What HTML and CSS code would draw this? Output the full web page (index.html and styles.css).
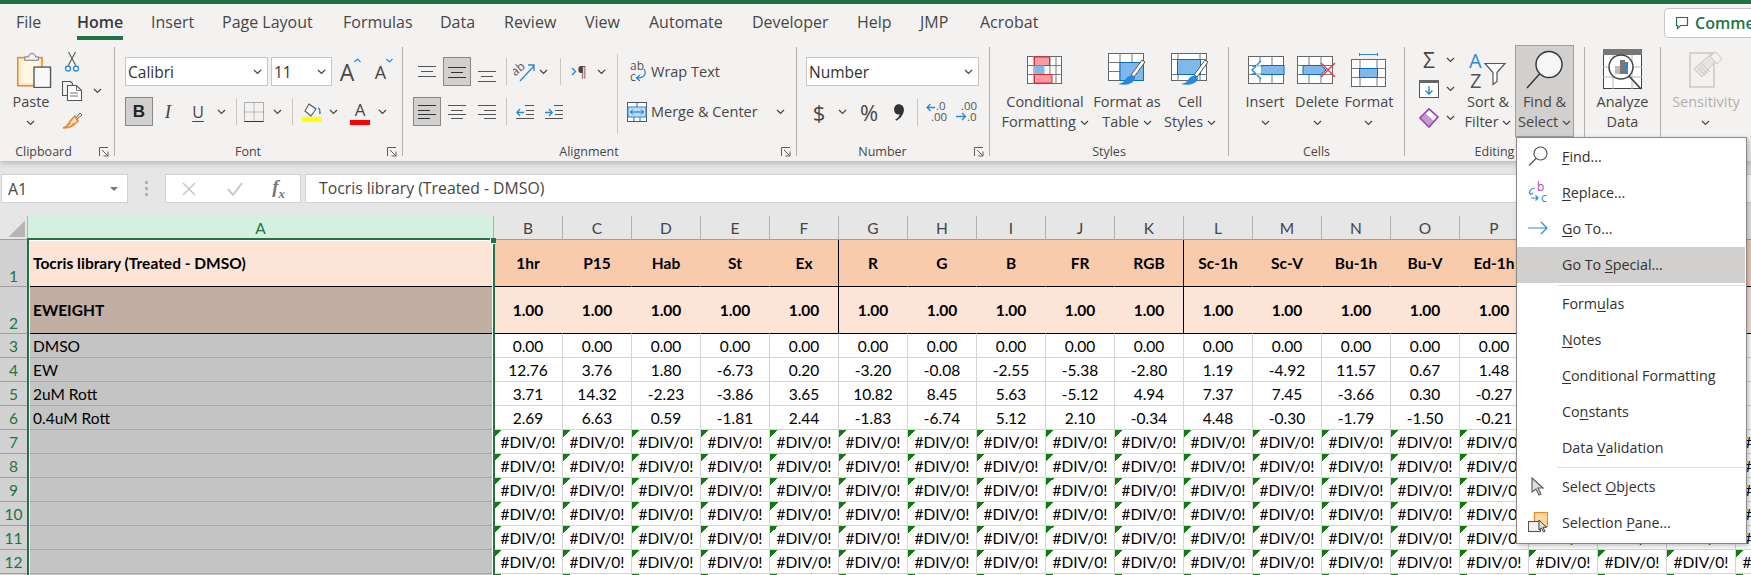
FILE: index.html
```html
<!DOCTYPE html>
<html lang="en">
  <head>
    <meta charset="UTF-8" />
    <title>Tocris library - Excel</title>
    <link rel="stylesheet" href="styles.css">
  </head>
  <body>
    <!-- shared icon bits -->
    <svg class="sprite" width="0" height="0">
      <symbol id="chev" viewBox="0 0 9 6"><path d="M1 1l3.5 3.5L8 1" fill="none" stroke="#444" stroke-width="1.2"/></symbol>
      <symbol id="launch" viewBox="0 0 10 10"><path d="M.5 9V.5H9M3 3l5.5 5.5M9 4.5V9H4.5" fill="none" stroke="#605e5c"/></symbol>
    </svg>

    <div class="topbar"></div>

    <div class="ribbon">
      <div class="tabs">
        <span>File</span>
        <span class="tab-on">Home</span>
        <span>Insert</span>
        <span>Page Layout</span>
        <span>Formulas</span>
        <span>Data</span>
        <span>Review</span>
        <span>View</span>
        <span>Automate</span>
        <span>Developer</span>
        <span>Help</span>
        <span>JMP</span>
        <span>Acrobat</span>
        <div class="comments">
          <svg width="14" height="14" viewBox="0 0 14 14"><path d="M1.5 1.5h11v8h-7l-3 3v-3h-1z" fill="none" stroke="#217346" stroke-width="1.2"/></svg>
          <span>Comments</span>
        </div>
      </div>

      <div class="groups">
        <!-- Clipboard -->
        <section class="group g-clip">
          <div class="body row">
            <div class="big w-paste">
              <div class="big-ic paste-ic">
                <svg width="35" height="36" viewBox="0 0 36 37">
                  <rect x=".75" y="5.75" width="25" height="29" fill="#fde8bf" stroke="#e8862e" stroke-width="1.5"/>
                  <rect x="4" y="9" width="19" height="23" fill="#fff7e4"/>
                  <path d="M8 8.5V5h4c0-5 7-5 7 0h3v3.5z" fill="#f3f2f1" stroke="#777"/>
                  <rect x="17.5" y="15.5" width="17" height="21" fill="#f9f9f9" stroke="#555" stroke-width="1.4"/>
                </svg>
              </div>
              <div class="big-text">Paste<br><svg class="chev"><use href="#chev"/></svg></div>
            </div>
            <div class="clip-tools">
              <svg width="16" height="21" viewBox="0 0 16 21"><path d="M4.5 1l7 13M11.5 1l-7 13" fill="none" stroke="#555" stroke-width="1.1"/><circle cx="4" cy="17.5" r="2.5" fill="none" stroke="#2b88d8" stroke-width="1.3"/><circle cx="12" cy="17.5" r="2.5" fill="none" stroke="#2b88d8" stroke-width="1.3"/></svg>
              <span></span>
              <svg width="21" height="20" viewBox="0 0 21 20"><path d="M5.5 14.5H.5V.5h8l2 2v2" fill="none" stroke="#555" stroke-width="1.1"/><path d="M5.5 4.5h9l5 5v10h-14z" fill="#fff" stroke="#555" stroke-width="1.1"/><path d="M14.5 4.5v5h5M8 12h8M8 15h8" fill="none" stroke="#777"/></svg>
              <svg class="chev"><use href="#chev"/></svg>
              <svg width="21" height="20" viewBox="0 0 21 20"><path d="M14 7l4-5 2 2-5 4" fill="#eee" stroke="#666"/><path d="M13 5l3 5-2 2c-3 3-8 5-13 5 3-1 5-3 6-5 1-2 3-4 6-7z" fill="#f7dfc2" stroke="#e8862e" stroke-width="1.5"/><path d="M5 15l4-3M9 15l3-3" stroke="#e8862e"/></svg>
            </div>
          </div>
          <div class="label"><span class="label-text">Clipboard</span><svg class="launch"><use href="#launch"/></svg></div>
        </section>

        <!-- Font -->
        <section class="group g-font">
          <div class="body">
            <div class="font-row1">
              <div class="select w-font"><span>Calibri</span><svg class="chev"><use href="#chev"/></svg></div>
              <div class="select w-size"><span>11</span><svg class="chev"><use href="#chev"/></svg></div>
              <div class="grow-a"><span class="big-a">A</span><svg width="7" height="5" viewBox="0 0 7 5"><path d="M.5 4l3-3 3 3" fill="none" stroke="#2b88d8" stroke-width="1.2"/></svg></div>
              <div class="grow-a small-a"><span class="big-a">A</span><svg width="7" height="5" viewBox="0 0 7 5"><path d="M.5 1l3 3 3-3" fill="none" stroke="#2b88d8" stroke-width="1.2"/></svg></div>
            </div>
            <div class="font-row2">
              <b class="btn-on bold-b">B</b>
              <i class="serif-i">I</i>
              <u class="under-u">U</u>
              <svg class="chev"><use href="#chev"/></svg>
              <span class="vsep"></span>
              <svg width="20" height="20" viewBox="0 0 20 20"><path d="M.5.5h19v19H.5z" fill="none" stroke="#666" stroke-dasharray="1 1"/><path d="M10 .5v19M.5 10h19" stroke="#888" stroke-dasharray="1 1"/><path d="M.5 19.5h19" stroke="#333"/></svg>
              <svg class="chev"><use href="#chev"/></svg>
              <span class="vsep"></span>
              <svg width="20" height="20" viewBox="0 0 20 20"><path d="M7 2l7 5-5 7-6-5z" fill="#fff" stroke="#555" stroke-width="1.1"/><path d="M16 6c2 0 2 3 2 6" fill="none" stroke="#2b88d8" stroke-width="1.6"/><rect y="15" width="20" height="5" fill="#ffff00"/></svg>
              <svg class="chev"><use href="#chev"/></svg>
              <div class="color-a"><span>A</span><i></i></div>
              <svg class="chev"><use href="#chev"/></svg>
            </div>
          </div>
          <div class="label"><span class="label-text">Font</span><svg class="launch"><use href="#launch"/></svg></div>
        </section>

        <!-- Alignment -->
        <section class="group g-align">
          <div class="body row">
            <div class="align-left">
              <div class="align-row1">
                <svg class="ic18" viewBox="0 0 18 14"><path d="M0 1.5h18M3 6.5h12M0 11.5h18" stroke="#555"/></svg>
                <span class="btn-on"><svg class="ic18" viewBox="0 0 18 14"><path d="M0 2.5h18M3 7.5h12M0 12.5h18" stroke="#333"/></svg></span>
                <svg class="ic18 low" viewBox="0 0 18 14"><path d="M0 1.5h18M3 6.5h12M0 11.5h18" stroke="#555"/></svg>
                <span class="vsep"></span>
                <svg width="22" height="20" viewBox="0 0 22 20"><text x="0" y="11" class="ab" transform="rotate(-40 6 10)">ab</text><path d="M7 19L21 4M15 3h6v6" fill="none" stroke="#2b88d8" stroke-width="1.3"/></svg>
                <svg class="chev"><use href="#chev"/></svg>
                <span class="vsep"></span>
                <span class="para"><svg width="6" height="9" viewBox="0 0 6 9"><path d="M1 1l3.5 3.5L1 8" fill="none" stroke="#2b88d8" stroke-width="1.4"/></svg>¶</span>
                <svg class="chev"><use href="#chev"/></svg>
              </div>
              <div class="align-row2">
                <span class="btn-on"><svg class="ic18" viewBox="0 0 18 16"><path d="M0 1.5h18M0 6.5h12M0 10.5h18M0 14.5h12" stroke="#333"/></svg></span>
                <svg class="ic18" viewBox="0 0 18 16"><path d="M0 1.5h18M3 6.5h12M0 10.5h18M3 14.5h12" stroke="#555"/></svg>
                <svg class="ic18" viewBox="0 0 18 16"><path d="M0 1.5h18M6 6.5h12M0 10.5h18M6 14.5h12" stroke="#555"/></svg>
                <span class="vsep"></span>
                <svg class="ic18" viewBox="0 0 18 16"><path d="M9 1.5h9M10 6.5h8M10 10.5h8M0 14.5h18" stroke="#555"/><path d="M8 8.500H1M4 5L.8 8.500 4 12" fill="none" stroke="#2b88d8" stroke-width="1.3"/></svg>
                <svg class="ic18" viewBox="0 0 18 16"><path d="M9 1.5h9M10 6.5h8M10 10.5h8M0 14.5h18" stroke="#555"/><path d="M0 8.500h7M4 5l3.200 3.500L4 12" fill="none" stroke="#2b88d8" stroke-width="1.3"/></svg>
              </div>
            </div>
            <div class="align-right">
              <div class="wrap-row">
                <svg width="20" height="22" viewBox="0 0 20 22"><text x="3" y="9" class="ab">ab</text><text x="3" y="20" class="ab">c</text><path d="M17 8c3 5 0 9-7 9M13 14l-3.500 3 3.500 3" fill="none" stroke="#2b88d8" stroke-width="1.3"/></svg>
                <span>Wrap Text</span>
              </div>
              <div class="wrap-row">
                <svg width="20" height="20" viewBox="0 0 20 20"><rect x=".5" y=".5" width="19" height="19" fill="#fff" stroke="#555"/><rect x="1" y="5" width="18" height="10" fill="#bcdcf4" stroke="#2b88d8"/><path d="M3.500 10h13M6 7.500L3.500 10 6 12.500M14 7.500l2.500 2.500-2.500 2.500M10 1v4M7 15v4M13 15v4" fill="none" stroke="#0b6cbd"/></svg>
                <span>Merge &amp; Center</span>
                <svg class="chev merge-chev"><use href="#chev"/></svg>
              </div>
            </div>
          </div>
          <div class="label"><span class="label-text">Alignment</span><svg class="launch"><use href="#launch"/></svg></div>
        </section>

        <!-- Number -->
        <section class="group g-num">
          <div class="body">
            <div class="select w-num"><span>Number</span><svg class="chev"><use href="#chev"/></svg></div>
            <div class="num-row">
              <span class="num-big">$</span>
              <svg class="chev"><use href="#chev"/></svg>
              <span class="num-big">%</span>
              <svg width="12" height="19" viewBox="0 0 11 17"><path d="M5 1c3 0 5 2 5 5 0 4-3 8-7 10l-1-1c2-1 4-3 4-5-3 1-5-1-5-4 0-3 2-5 4-5z" fill="#333"/></svg>
              <span class="vsep"></span>
              <svg width="21" height="20" viewBox="0 0 21 20"><text x="10" y="8" class="dec">.0</text><text x="5" y="19" class="dec">.00</text><path d="M9 5.500H1M4.500 2L1 5.500 4.500 9" fill="none" stroke="#2b88d8" stroke-width="1.3"/></svg>
              <svg width="21" height="20" viewBox="0 0 21 20"><text x="5" y="8" class="dec">.00</text><text x="11" y="19" class="dec">.0</text><path d="M0 14.500h9M6 11l3.500 3.500L6 18" fill="none" stroke="#2b88d8" stroke-width="1.3"/></svg>
            </div>
          </div>
          <div class="label"><span class="label-text">Number</span><svg class="launch"><use href="#launch"/></svg></div>
        </section>

        <!-- Styles -->
        <section class="group g-styles">
          <div class="body row">
            <div class="big w-cf">
              <div class="big-ic">
                <svg width="36" height="28" viewBox="0 0 36 28"><rect x=".5" y=".5" width="34" height="27" fill="#fff" stroke="#666"/><path d="M7 0v28M23 0v28M29 0v28M0 9.500h35M0 18.500h35" stroke="#777"/><rect x="7.500" y="1" width="15" height="8.500" fill="#fc9aa2" stroke="#e0262e"/><rect x="7.500" y="9.500" width="10" height="9" fill="#7fb8ea"/><rect x="7.500" y="18.500" width="17.500" height="8.500" fill="#fc9aa2" stroke="#e0262e"/></svg>
              </div>
              <div class="big-text">Conditional<br>Formatting <svg class="chev"><use href="#chev"/></svg></div>
            </div>
            <div class="big w-fat">
              <div class="big-ic">
                <svg width="38" height="34" viewBox="0 0 38 34"><rect x=".5" y=".5" width="35" height="27" fill="#fff" stroke="#666"/><path d="M12 0v28M24 0v28M0 9.500h36M0 18.500h36" stroke="#777"/><rect x="12" y="9.500" width="23.500" height="18" fill="#7fb8ea" stroke="#0b6cbd"/><path d="M34 7l3 2-11 15-3-2z" fill="#fff" stroke="#555"/><path d="M22 23c3-2 5 1 5 3-2 5-10 7-17 5 4-1 6-2 7-4s3-4 5-4z" fill="#2b88d8"/></svg>
              </div>
              <div class="big-text">Format as<br>Table <svg class="chev"><use href="#chev"/></svg></div>
            </div>
            <div class="big w-cell">
              <div class="big-ic">
                <svg width="38" height="34" viewBox="0 0 38 34"><rect x=".5" y=".5" width="35" height="27" fill="#fff" stroke="#666"/><path d="M7 0v28M29 0v28M0 6.500h36M0 21.500h36" stroke="#777"/><rect x="6.500" y="6.500" width="23" height="15" fill="#7fb8ea" stroke="#0b6cbd"/><path d="M34 7l3 2-11 15-3-2z" fill="#fff" stroke="#555"/><path d="M22 23c3-2 5 1 5 3-2 5-10 7-17 5 4-1 6-2 7-4s3-4 5-4z" fill="#2b88d8"/></svg>
              </div>
              <div class="big-text">Cell<br>Styles <svg class="chev"><use href="#chev"/></svg></div>
            </div>
          </div>
          <div class="label"><span class="label-text">Styles</span></div>
        </section>

        <!-- Cells -->
        <section class="group g-cells">
          <div class="body row">
            <div class="big w-ins">
              <div class="big-ic">
                <svg width="40" height="28" viewBox="0 0 40 28"><rect x="3.500" y=".5" width="35" height="27" fill="#fff" stroke="#666"/><path d="M15 0v28M27 0v28M3 9.500h36M3 18.500h36" stroke="#777"/><rect x="11" y="9.500" width="28" height="9" fill="#7fb8ea" stroke="#0b6cbd"/><path d="M16 5l-9 9 9 9M7 10h11M7 18h11" fill="#fff" stroke="#2b88d8" stroke-width="1.4"/><path d="M16 10h-5M16 18h-5" stroke="#fff"/></svg>
              </div>
              <div class="big-text">Insert<br><svg class="chev"><use href="#chev"/></svg></div>
            </div>
            <div class="big w-del">
              <div class="big-ic">
                <svg width="40" height="28" viewBox="0 0 40 28"><rect x=".5" y=".5" width="35" height="27" fill="#fff" stroke="#666"/><path d="M12 0v28M24 0v28M0 9.500h36M0 18.500h36" stroke="#777"/><path d="M6 9.500h18l5 4.500-5 4.500H6z" fill="#7fb8ea" stroke="#0b6cbd"/><path d="M24 7l14 14M38 7L24 21" stroke="#e8404a" stroke-width="1.5"/></svg>
              </div>
              <div class="big-text">Delete<br><svg class="chev"><use href="#chev"/></svg></div>
            </div>
            <div class="big w-fmt">
              <div class="big-ic">
                <svg width="36" height="34" viewBox="0 0 36 34"><path d="M8 1.500h19M8.500 0v3M26.500 0v3" stroke="#2b88d8"/><rect x=".5" y="6.500" width="34" height="27" fill="#fff" stroke="#666"/><path d="M9 6v28M26 6v28M0 15.500h35M0 24.500h35" stroke="#777"/><rect x="8.500" y="15.500" width="18" height="9" fill="#7fb8ea" stroke="#0b6cbd"/></svg>
              </div>
              <div class="big-text">Format<br><svg class="chev"><use href="#chev"/></svg></div>
            </div>
          </div>
          <div class="label"><span class="label-text">Cells</span></div>
        </section>

        <!-- Editing -->
        <section class="group g-edit">
          <div class="body row">
            <div class="edit-tools">
              <span class="sigma">Σ</span>
              <svg class="chev"><use href="#chev"/></svg>
              <svg width="20" height="18" viewBox="0 0 20 18"><rect x=".5" y=".5" width="19" height="17" fill="#fff" stroke="#555"/><rect x="0" y="0" width="20" height="3" fill="#666"/><path d="M10 6v8M6.500 10.500L10 14l3.500-3.500" fill="none" stroke="#2b88d8" stroke-width="1.4"/></svg>
              <svg class="chev"><use href="#chev"/></svg>
              <svg width="20" height="20" viewBox="0 0 20 20"><path d="M1 10l9-9 9 8-9 10z" fill="#fff" stroke="#9b4bb0" stroke-width="1.4"/><path d="M1 10l5-5 9 8-5 6z" fill="#c89ad4"/><path d="M1 10l9-9 9 8-9 10z" fill="none" stroke="#9b4bb0" stroke-width="1.4"/></svg>
              <svg class="chev"><use href="#chev"/></svg>
            </div>
            <div class="big w-sort">
              <div class="big-ic">
                <svg width="38" height="38" viewBox="0 0 38 38"><text x="0" y="17" class="sort-a">A</text><text x="1" y="37" class="sort-z">Z</text><path d="M16 12.500h20l-8 9v9l-4 3v-12z" fill="#fff" stroke="#555" stroke-width="1.2"/></svg>
              </div>
              <div class="big-text">Sort &amp;<br>Filter <svg class="chev"><use href="#chev"/></svg></div>
            </div>
            <div class="big w-find btn-active">
              <div class="big-ic">
                <svg width="40" height="40" viewBox="0 0 40 40"><circle cx="24" cy="14.500" r="13" fill="#f6f6f6" stroke="#333" stroke-width="1.4"/><path d="M14.500 24L2 38" stroke="#333" stroke-width="1.4"/></svg>
              </div>
              <div class="big-text">Find &amp;<br>Select <svg class="chev"><use href="#chev"/></svg></div>
            </div>
          </div>
          <div class="label"><span class="label-text">Editing</span></div>
        </section>

        <!-- Analyze Data -->
        <section class="group g-ana">
          <div class="body">
            <div class="big">
              <div class="big-ic">
                <svg width="40" height="41" viewBox="0 0 40 41"><rect x=".5" y=".5" width="38" height="39" fill="#fff" stroke="#444"/><rect x="0" y="0" width="39" height="6" fill="#777"/><path d="M0 18h39M0 28h39M10 6v34M29 6v34" stroke="#bbb"/><circle cx="18" cy="18" r="12" fill="#fff" stroke="#444" stroke-width="1.5"/><rect x="12" y="17" width="5" height="8" fill="#bbb"/><rect x="17" y="11" width="5" height="14" fill="#777"/><rect x="22" y="13" width="3" height="12" fill="#2b88d8"/><path d="M26 27l12 13" stroke="#444" stroke-width="1.8"/></svg>
              </div>
              <div class="big-text">Analyze<br>Data</div>
            </div>
          </div>
        </section>

        <!-- Sensitivity -->
        <section class="group g-sens">
          <div class="body">
            <div class="big disabled">
              <div class="big-ic">
                <svg width="34" height="37" viewBox="0 0 34 37"><rect x="1" y="2" width="24" height="34" fill="#f3f2f1" stroke="#c8c6c4" stroke-width="1.400"/><path d="M5 18L22 3l6 5-15 18z" fill="#e6e5e4" stroke="#c8c6c4"/><path d="M21 5l6-4 6 7-5 5z" fill="#f3f2f1" stroke="#c8c6c4"/><path d="M9 17l8 8M11 15l8 8M13 13l8 8" stroke="#c8c6c4"/></svg>
              </div>
              <div class="big-text">Sensitivity<br><svg class="chev"><use href="#chev"/></svg></div>
            </div>
          </div>
        </section>
      </div>
    </div>

    <div class="formula-bar">
      <div class="name-box"><span>A1</span><i class="down-tri"></i></div>
      <div class="dots"><i></i><i></i><i></i></div>
      <div class="fx-box">
        <svg width="16" height="16" viewBox="0 0 16 16"><path d="M2 2l12 12M14 2L2 14" stroke="#c8c8c8" stroke-width="1.600"/></svg>
        <svg width="18" height="16" viewBox="0 0 18 16"><path d="M2 8l5 6L16 2" fill="none" stroke="#c8c8c8" stroke-width="2"/></svg>
        <span class="fx">f<sub>x</sub></span>
      </div>
      <div class="fx-input">Tocris library (Treated - DMSO)</div>
    </div>

    <div class="sheet">
      <table class="grid">
        <colgroup>
          <col class="c-head"><col class="c-a">
          <col><col><col><col><col><col><col><col><col><col><col><col><col><col><col><col><col><col><col>
        </colgroup>
        <thead>
          <tr class="r-cols">
            <th class="corner"><i></i></th><th class="col-on">A</th>
            <th>B</th><th>C</th><th>D</th><th>E</th><th>F</th><th>G</th><th>H</th><th>I</th><th>J</th><th>K</th>
            <th>L</th><th>M</th><th>N</th><th>O</th><th>P</th><th>Q</th><th>R</th><th>S</th><th>T</th>
          </tr>
        </thead>
        <tbody>
          <tr class="r-tall r-names">
            <th class="low-num">1</th><td class="a-title">Tocris library (Treated - DMSO)</td>
            <td>1hr</td><td>P15</td><td>Hab</td><td>St</td><td class="split">Ex</td><td>R</td><td>G</td><td>B</td><td>FR</td><td class="split">RGB</td>
            <td>Sc-1h</td><td>Sc-V</td><td>Bu-1h</td><td>Bu-V</td><td>Ed-1h</td><td></td><td></td><td></td><td></td>
          </tr>
          <tr class="r-tall r-weights">
            <th class="low-num">2</th><td class="a-weight">EWEIGHT</td>
            <td>1.00</td><td>1.00</td><td>1.00</td><td>1.00</td><td class="split">1.00</td><td>1.00</td><td>1.00</td><td>1.00</td><td>1.00</td><td class="split">1.00</td>
            <td>1.00</td><td>1.00</td><td>1.00</td><td>1.00</td><td>1.00</td><td></td><td></td><td></td><td></td>
          </tr>
          <tr>
            <th>3</th><td class="a-sel">DMSO</td>
            <td>0.00</td><td>0.00</td><td>0.00</td><td>0.00</td><td>0.00</td><td>0.00</td><td>0.00</td><td>0.00</td><td>0.00</td><td>0.00</td>
            <td>0.00</td><td>0.00</td><td>0.00</td><td>0.00</td><td>0.00</td><td></td><td></td><td></td><td></td>
          </tr>
          <tr>
            <th>4</th><td class="a-sel">EW</td>
            <td>12.76</td><td>3.76</td><td>1.80</td><td>-6.73</td><td>0.20</td><td>-3.20</td><td>-0.08</td><td>-2.55</td><td>-5.38</td><td>-2.80</td>
            <td>1.19</td><td>-4.92</td><td>11.57</td><td>0.67</td><td>1.48</td><td></td><td></td><td></td><td></td>
          </tr>
          <tr>
            <th>5</th><td class="a-sel">2uM Rott</td>
            <td>3.71</td><td>14.32</td><td>-2.23</td><td>-3.86</td><td>3.65</td><td>10.82</td><td>8.45</td><td>5.63</td><td>-5.12</td><td>4.94</td>
            <td>7.37</td><td>7.45</td><td>-3.66</td><td>0.30</td><td>-0.27</td><td></td><td></td><td></td><td></td>
          </tr>
          <tr>
            <th>6</th><td class="a-sel">0.4uM Rott</td>
            <td>2.69</td><td>6.63</td><td>0.59</td><td>-1.81</td><td>2.44</td><td>-1.83</td><td>-6.74</td><td>5.12</td><td>2.10</td><td>-0.34</td>
            <td>4.48</td><td>-0.30</td><td>-1.79</td><td>-1.50</td><td>-0.21</td><td></td><td></td><td></td><td></td>
          </tr>
          <tr>
            <th>7</th><td class="a-sel"></td>
            <td class="err">#DIV/0!</td><td class="err">#DIV/0!</td><td class="err">#DIV/0!</td><td class="err">#DIV/0!</td><td class="err">#DIV/0!</td><td class="err">#DIV/0!</td><td class="err">#DIV/0!</td><td class="err">#DIV/0!</td><td class="err">#DIV/0!</td><td class="err">#DIV/0!</td>
            <td class="err">#DIV/0!</td><td class="err">#DIV/0!</td><td class="err">#DIV/0!</td><td class="err">#DIV/0!</td><td class="err">#DIV/0!</td><td class="err">#DIV/0!</td><td class="err">#DIV/0!</td><td class="err">#DIV/0!</td><td class="err">#DIV/0!</td>
          </tr>
          <tr>
            <th>8</th><td class="a-sel"></td>
            <td class="err">#DIV/0!</td><td class="err">#DIV/0!</td><td class="err">#DIV/0!</td><td class="err">#DIV/0!</td><td class="err">#DIV/0!</td><td class="err">#DIV/0!</td><td class="err">#DIV/0!</td><td class="err">#DIV/0!</td><td class="err">#DIV/0!</td><td class="err">#DIV/0!</td>
            <td class="err">#DIV/0!</td><td class="err">#DIV/0!</td><td class="err">#DIV/0!</td><td class="err">#DIV/0!</td><td class="err">#DIV/0!</td><td class="err">#DIV/0!</td><td class="err">#DIV/0!</td><td class="err">#DIV/0!</td><td class="err">#DIV/0!</td>
          </tr>
          <tr>
            <th>9</th><td class="a-sel"></td>
            <td class="err">#DIV/0!</td><td class="err">#DIV/0!</td><td class="err">#DIV/0!</td><td class="err">#DIV/0!</td><td class="err">#DIV/0!</td><td class="err">#DIV/0!</td><td class="err">#DIV/0!</td><td class="err">#DIV/0!</td><td class="err">#DIV/0!</td><td class="err">#DIV/0!</td>
            <td class="err">#DIV/0!</td><td class="err">#DIV/0!</td><td class="err">#DIV/0!</td><td class="err">#DIV/0!</td><td class="err">#DIV/0!</td><td class="err">#DIV/0!</td><td class="err">#DIV/0!</td><td class="err">#DIV/0!</td><td class="err">#DIV/0!</td>
          </tr>
          <tr>
            <th>10</th><td class="a-sel"></td>
            <td class="err">#DIV/0!</td><td class="err">#DIV/0!</td><td class="err">#DIV/0!</td><td class="err">#DIV/0!</td><td class="err">#DIV/0!</td><td class="err">#DIV/0!</td><td class="err">#DIV/0!</td><td class="err">#DIV/0!</td><td class="err">#DIV/0!</td><td class="err">#DIV/0!</td>
            <td class="err">#DIV/0!</td><td class="err">#DIV/0!</td><td class="err">#DIV/0!</td><td class="err">#DIV/0!</td><td class="err">#DIV/0!</td><td class="err">#DIV/0!</td><td class="err">#DIV/0!</td><td class="err">#DIV/0!</td><td class="err">#DIV/0!</td>
          </tr>
          <tr>
            <th>11</th><td class="a-sel"></td>
            <td class="err">#DIV/0!</td><td class="err">#DIV/0!</td><td class="err">#DIV/0!</td><td class="err">#DIV/0!</td><td class="err">#DIV/0!</td><td class="err">#DIV/0!</td><td class="err">#DIV/0!</td><td class="err">#DIV/0!</td><td class="err">#DIV/0!</td><td class="err">#DIV/0!</td>
            <td class="err">#DIV/0!</td><td class="err">#DIV/0!</td><td class="err">#DIV/0!</td><td class="err">#DIV/0!</td><td class="err">#DIV/0!</td><td class="err">#DIV/0!</td><td class="err">#DIV/0!</td><td class="err">#DIV/0!</td><td class="err">#DIV/0!</td>
          </tr>
          <tr>
            <th>12</th><td class="a-sel"></td>
            <td class="err">#DIV/0!</td><td class="err">#DIV/0!</td><td class="err">#DIV/0!</td><td class="err">#DIV/0!</td><td class="err">#DIV/0!</td><td class="err">#DIV/0!</td><td class="err">#DIV/0!</td><td class="err">#DIV/0!</td><td class="err">#DIV/0!</td><td class="err">#DIV/0!</td>
            <td class="err">#DIV/0!</td><td class="err">#DIV/0!</td><td class="err">#DIV/0!</td><td class="err">#DIV/0!</td><td class="err">#DIV/0!</td><td class="err">#DIV/0!</td><td class="err">#DIV/0!</td><td class="err">#DIV/0!</td><td class="err">#DIV/0!</td>
          </tr>
          <tr>
            <th></th><td class="a-sel"></td>
            <td class="err"></td><td class="err"></td><td class="err"></td><td class="err"></td><td class="err"></td><td class="err"></td><td class="err"></td><td class="err"></td><td class="err"></td><td class="err"></td>
            <td class="err"></td><td class="err"></td><td class="err"></td><td class="err"></td><td class="err"></td><td class="err"></td><td class="err"></td><td class="err"></td><td class="err"></td>
          </tr>
        </tbody>
      </table>
      <!-- green box round the selected column -->
      <div class="selection"><i class="handle"></i></div>
    </div>

    <!-- Find & Select dropdown -->
    <div class="menu">
      <div class="item">
        <svg width="20" height="20" viewBox="0 0 20 20"><circle cx="12.500" cy="7.500" r="6.500" fill="none" stroke="#555" stroke-width="1.200"/><path d="M8 12.500L1 19.500" stroke="#555" stroke-width="1.200"/></svg>
        <span><u>F</u>ind...</span>
      </div>
      <div class="item">
        <svg width="20" height="22" viewBox="0 0 20 22"><text x="9" y="10" class="rep-b">b</text><text x="13" y="21" class="rep-c">c</text><path d="M7 7C2 7 1 11 2 13M1 11l1.500 2.500L5 12M3 17h7M7.500 14.500L10 17l-2.500 2.500" fill="none" stroke="#2b88d8" stroke-width="1.200"/></svg>
        <span><u>R</u>eplace...</span>
      </div>
      <div class="item">
        <svg width="20" height="14" viewBox="0 0 20 14"><path d="M0 7h19M13 1l6 6-6 6" fill="none" stroke="#2b88d8" stroke-width="1.200"/></svg>
        <span><u>G</u>o To...</span>
      </div>
      <div class="item item-on"><span>Go To <u>S</u>pecial...</span></div>
      <div class="menu-sep"></div>
      <div class="item"><span>Form<u>u</u>las</span></div>
      <div class="item"><span><u>N</u>otes</span></div>
      <div class="item"><span><u>C</u>onditional Formatting</span></div>
      <div class="item"><span>Co<u>n</u>stants</span></div>
      <div class="item"><span>Data <u>V</u>alidation</span></div>
      <div class="menu-sep sep-low"></div>
      <div class="item">
        <svg width="14" height="19" viewBox="0 0 14 19"><path d="M1 1v14l4-3 3 6 2-1-3-6h5z" fill="#e1dfdd" stroke="#555" stroke-width="1.100"/></svg>
        <span>Select <u>O</u>bjects</span>
      </div>
      <div class="item">
        <svg width="20" height="21" viewBox="0 0 20 21"><rect x="6.500" y=".5" width="13" height="14" fill="#fbd99c" stroke="#e8862e" stroke-width="1.200"/><rect x=".5" y="9.500" width="12" height="10" fill="#f3f2f1" stroke="#555" stroke-width="1.100"/><path d="M11 8v10l2.500-2 2 4 1.500-.7-2-4h3.500z" fill="#e1dfdd" stroke="#444"/></svg>
        <span>Selection <u>P</u>ane...</span>
      </div>
    </div>
  </body>
</html>
```

FILE: styles.css
```css
* {
  box-sizing: border-box;
}

html,
body {
  margin: 0;
  padding: 0;
  width: 1751px;
  height: 575px;
  overflow: hidden;
}

body {
  position: relative;
  font-family: "Open Sans", "Noto Sans", Arial, sans-serif;
  font-size: 14px;
  color: #484644;
  background-color: #e6e6e6;
}

svg {
  display: block;
  flex: none;
}

svg text {
  font-family: "Open Sans", sans-serif;
}

.sprite {
  position: absolute;
}

.chev {
  width: 9px;
  height: 6px;
  display: inline-block;
  vertical-align: middle;
}

.topbar {
  height: 4px;
  background-color: #217346;
}

/* ribbon */
.ribbon {
  position: relative;
  height: 157px;
  background-color: #f3f2f1;
  box-shadow: 0 2px 6px rgba(0, 0, 0, 0.22);
  z-index: 2;
}

.tabs {
  display: grid;
  grid-template-columns: 61px 74px 71px 121px 97px 64px 81px 64px 103px 105px 63px 60px 684px 1fr;
  height: 36px;
  padding-top: 7px;
  padding-left: 16px;
  font-size: 16px;
  line-height: 22px;
  color: #484644;
}

.tab-on {
  align-self: start;
  justify-self: start;
  height: 29px;
  font-weight: 600;
  color: #3b3a39;
  border-bottom: 4px solid #217346;
}

.comments {
  display: flex;
  align-items: center;
  gap: 6px;
  height: 30px;
  width: 110px;
  margin-top: -3px;
  padding-left: 10px;
  background-color: #fff;
  border: 1px solid #c8c6c4;
  border-radius: 4px;
  font-weight: 600;
  font-size: 16px;
  color: #217346;
  white-space: nowrap;
}

.groups {
  display: flex;
  height: 109px;
  margin-top: 7px;
}

.group {
  display: flex;
  flex-direction: column;
  flex: none;
  border-right: 1px solid #b3b0ad;
}

.g-clip { width: 115px; }
.g-font { width: 288px; }
.g-align { width: 394px; }
.g-num { width: 193px; }
.g-styles { width: 239px; }
.g-cells { width: 176px; }
.g-edit { width: 180px; }
.g-ana { width: 76px; }
.g-sens { width: 90px; border-right: none; }

.body {
  flex: 1;
  min-height: 0;
}

.row {
  display: flex;
}

.label {
  display: flex;
  height: 14px;
  line-height: 20px;
  font-size: 12.5px;
  color: #484644;
}

.label-text {
  flex: 1;
  text-align: center;
}

.launch {
  width: 10px;
  height: 10px;
  margin: 5px 5px 0 6px;
}

.g-clip .label-text {
  padding-right: 6px;
}

/* big buttons: icon on top, two lines under it */
.big {
  display: flex;
  flex-direction: column;
  align-items: center;
  flex: none;
}

.big-ic {
  display: flex;
  align-items: center;
  justify-content: center;
  height: 45px;
}

.paste-ic {
  padding-left: 6px;
}

.big-text {
  text-align: center;
  font-size: 14.5px;
  line-height: 20px;
  white-space: nowrap;
}

.disabled {
  color: #b3b0ad;
}

.w-paste { width: 42px; margin-left: 10px; }
.w-cf { width: 90px; margin-left: 10px; }
.w-fat { width: 74px; }
.w-cell { width: 52px; }
.w-ins { width: 56px; margin-left: 8px; }
.w-del { width: 48px; }
.w-fmt { width: 56px; }
.w-sort { width: 50px; }

.w-find {
  width: 59px;
  height: 92px;
  margin: -2px 0 0 2px;
  padding-top: 1px;
  border: 1px solid #a19f9d;
}

.btn-active {
  background-color: #d2d0ce;
}

.btn-on {
  display: flex;
  align-items: center;
  justify-content: center;
  width: 28px;
  height: 29px;
  background-color: #d2d0ce;
  border: 1px solid #8a8886;
}

.vsep {
  width: 1px;
  height: 27px;
  background-color: #c8c6c4;
}

/* clipboard */
.clip-tools {
  display: grid;
  grid-template-columns: 34px 16px;
  grid-auto-rows: 30px;
  margin-top: -1px;
  margin-left: 3px;
  align-items: center;
  justify-items: center;
}

/* select boxes */
.select {
  display: flex;
  align-items: center;
  justify-content: space-between;
  height: 29px;
  padding: 0 5px 0 2px;
  background-color: #fff;
  border: 1px solid #c8c6c4;
  font-size: 15.5px;
  color: #323130;
}

.w-font { width: 143px; }
.w-size { width: 61px; }
.w-num { width: 173px; margin: 10px 0 0 9px; }

/* font group */
.g-font .body {
  padding: 10px 0 0 10px;
}

.font-row1 {
  display: grid;
  grid-template-columns: 146px 61px 37px 30px;
  align-items: center;
}

.grow-a {
  display: flex;
  justify-content: center;
  align-items: flex-start;
}

.big-a {
  font-size: 23px;
  line-height: 28px;
  color: #484644;
}

.small-a .big-a {
  font-size: 18px;
}

.font-row2 {
  display: grid;
  grid-template-columns: 28px 30px 30px 16px 14px 22px 24px 7px 32px 10px 38px 12px;
  height: 29px;
  margin-top: 11px;
  align-items: center;
  justify-items: center;
  color: #484644;
}

.bold-b {
  font-family: "Liberation Sans", sans-serif;
  font-size: 17px;
  color: #222;
}

.serif-i {
  font-family: "Liberation Serif", serif;
  font-size: 19px;
}

.under-u {
  font-family: "Open Sans", sans-serif;
  font-size: 16px;
  text-underline-offset: 3px;
}

.color-a {
  justify-self: start;
  margin-left: 12px;
  width: 20px;
  text-align: center;
  font-size: 17px;
  line-height: 22px;
}

.color-a span {
  display: block;
  height: 21px;
}

.color-a i {
  display: block;
  height: 5px;
  background-color: #ff0000;
}

/* alignment group */
.g-align .body {
  padding-top: 7px;
}

.align-left {
  margin-left: 10px;
  padding-top: 3px;
  width: 202px;
}

.align-row1,
.align-row2 {
  display: grid;
  height: 29px;
  align-items: center;
  justify-items: center;
}

.align-row1 {
  grid-template-columns: 28px 32px 28px 10px 26px 12px 22px 16px 28px;
}

.align-row2 {
  grid-template-columns: 28px 32px 28px 10px 28px 30px;
  margin-top: 11px;
}

.ic18 {
  width: 18px;
  height: 14px;
}

.align-row2 .ic18 {
  height: 16px;
}

.low {
  margin-top: 10px;
}

.ab {
  font-size: 12px;
  fill: #555;
}

.para {
  display: flex;
  align-items: center;
  font-size: 14px;
  color: #484644;
}

.align-right {
  width: 170px;
  margin-left: 2px;
  padding: 3px 0 0 9px;
  border-left: 1px solid #c8c6c4;
  height: 80px;
}

.wrap-row {
  display: flex;
  align-items: center;
  gap: 4px;
  height: 29px;
  margin-bottom: 11px;
  font-size: 14.5px;
  white-space: nowrap;
}

.merge-chev {
  margin-left: 14px;
}

/* number group */
.num-row {
  display: grid;
  grid-template-columns: 26px 20px 34px 26px 10px 28px 32px;
  height: 29px;
  margin: 11px 0 0 9px;
  align-items: center;
  justify-items: center;
}

.num-big {
  font-size: 22px;
  color: #484644;
}

.dec {
  font-size: 11.5px;
  fill: #555;
}

/* editing */
.edit-tools {
  display: grid;
  grid-template-columns: 32px 10px;
  grid-auto-rows: 29px;
  width: 50px;
  margin: -2px 0 0 8px;
  align-items: center;
  justify-items: center;
}

.sigma {
  font-size: 21px;
  line-height: 24px;
  color: #484644;
}

.sort-a {
  font-size: 20px;
  fill: #2b88d8;
}

.sort-z {
  font-size: 20px;
  fill: #555;
}

/* formula bar */
.formula-bar {
  display: flex;
  align-items: stretch;
  height: 55px;
  padding: 13px 0 13px 1px;
}

.name-box {
  display: flex;
  align-items: center;
  justify-content: space-between;
  width: 127px;
  padding: 0 9px 0 6px;
  background-color: #fff;
  border: 1px solid #d1d1d1;
  font-size: 16px;
}

.down-tri {
  width: 0;
  height: 0;
  border-left: 4px solid transparent;
  border-right: 4px solid transparent;
  border-top: 4px solid #777;
}

.dots {
  display: flex;
  flex-direction: column;
  justify-content: center;
  gap: 3px;
  width: 37px;
  padding-left: 17px;
}

.dots i {
  width: 3px;
  height: 3px;
  background-color: #b3b3b3;
}

.fx-box {
  display: flex;
  align-items: center;
  justify-content: space-between;
  width: 136px;
  padding: 0 15px 0 15px;
  background-color: #fff;
  border: 1px solid #d1d1d1;
}

.fx {
  font-family: "Liberation Serif", serif;
  font-style: italic;
  font-weight: bold;
  font-size: 19px;
  color: #777;
}

.fx sub {
  font-size: 13px;
}

.fx-input {
  flex: 1;
  margin-left: 4px;
  padding-left: 13px;
  background-color: #fff;
  border: 1px solid #d1d1d1;
  border-right: none;
  font-size: 15.8px;
  line-height: 27px;
}

/* sheet */
.sheet {
  position: relative;
  height: 359px;
  overflow: hidden;
  font-family: Lato, "Liberation Sans", sans-serif;
  font-size: 15.5px;
  color: #000;
  background-color: #fff;
}

.grid {
  border-collapse: separate;
  border-spacing: 0;
  table-layout: fixed;
  width: 1805px;
}

.grid col {
  width: 69px;
}

.grid col.c-head {
  width: 28px;
}

.grid col.c-a {
  width: 466px;
}

.grid tr {
  height: 24px;
}

.grid tr.r-tall {
  height: 47px;
}

.grid th,
.grid td {
  padding: 0;
  text-align: center;
  white-space: nowrap;
  overflow: hidden;
  border-right: 1px solid #d4d4d4;
  border-bottom: 1px solid #d4d4d4;
}

.grid thead th {
  font-weight: 400;
  color: #444;
  background-color: #e6e6e6;
  border-right: 1px solid #b1b1b1;
  border-bottom: 1px solid #9e9e9e;
}

.grid thead th.col-on {
  color: #217346;
  background-color: #d3f0e0;
}

.corner i {
  display: block;
  width: 16px;
  height: 16px;
  margin: 3px 0 0 9px;
  background: linear-gradient(135deg, transparent 50%, #b5b5b5 50%);
}

.grid tbody th {
  font-weight: 400;
  color: #217346;
  background-color: #d2d2d2;
  border-right: 1px solid #9e9e9e;
  border-bottom: 1px solid #9e9e9e;
}

.grid tbody th.low-num {
  vertical-align: bottom;
  line-height: 20px;
}

.r-names td {
  font-weight: 700;
  background-color: #f8cbad;
  border-right-color: #f8cbad;
  border-bottom-color: #000;
}

.r-weights td {
  font-weight: 700;
  background-color: #fce4d6;
  border-right-color: #fce4d6;
  border-bottom-color: #000;
}

.r-names td.split,
.r-weights td.split {
  border-right-color: #000;
}

.grid td.a-title,
.grid td.a-weight,
.grid td.a-sel {
  text-align: left;
  padding-left: 5px;
}

.r-names td.a-title {
  background-color: #fce4d6;
  border-right-color: #fce4d6;
}

.r-weights td.a-weight {
  background-color: #c1afa3;
  border-right-color: #c1afa3;
}

.grid td.a-sel {
  background-color: #c4c4c4;
  border-right-color: #c4c4c4;
  border-bottom-color: #a6a6a6;
}

.err {
  background: linear-gradient(135deg, #107c10 50%, transparent 50%) no-repeat 0 0 / 8px 8px;
}

.selection {
  position: absolute;
  left: 27px;
  top: 22px;
  width: 468px;
  height: 400px;
  border: 2px solid #217346;
  box-shadow: inset 0 0 0 1px #fff;
}

.handle {
  position: absolute;
  right: -3px;
  top: -2px;
  width: 6px;
  height: 6px;
  background-color: #217346;
  border: 1px solid #fff;
  border-width: 0 0 1px 1px;
}

/* dropdown */
.menu {
  position: absolute;
  left: 1516px;
  top: 137px;
  width: 231px;
  padding: 1px 1px 2px 0;
  background-color: #fff;
  border: 1px solid #8a8886;
  box-shadow: 2px 2px 5px rgba(0, 0, 0, 0.25);
  z-index: 5;
  font-size: 14.3px;
  color: #323130;
}

.item {
  display: flex;
  align-items: center;
  height: 36px;
  padding-left: 45px;
  padding-bottom: 2px;
  white-space: nowrap;
}

.item svg {
  margin-left: -34px;
  margin-right: 14px;
  width: 20px;
}

.item u {
  text-underline-offset: 2px;
}

.item-on {
  background-color: #d2d0ce;
}

.menu-sep {
  height: 1px;
  margin: 2px 0 0 40px;
  background-color: #e1dfdd;
}

.sep-low {
  margin: 1px 0 1px 40px;
}

.rep-b {
  font-size: 12px;
  fill: #b146c2;
}

.rep-c {
  font-size: 12px;
  fill: #2b88d8;
}
```
